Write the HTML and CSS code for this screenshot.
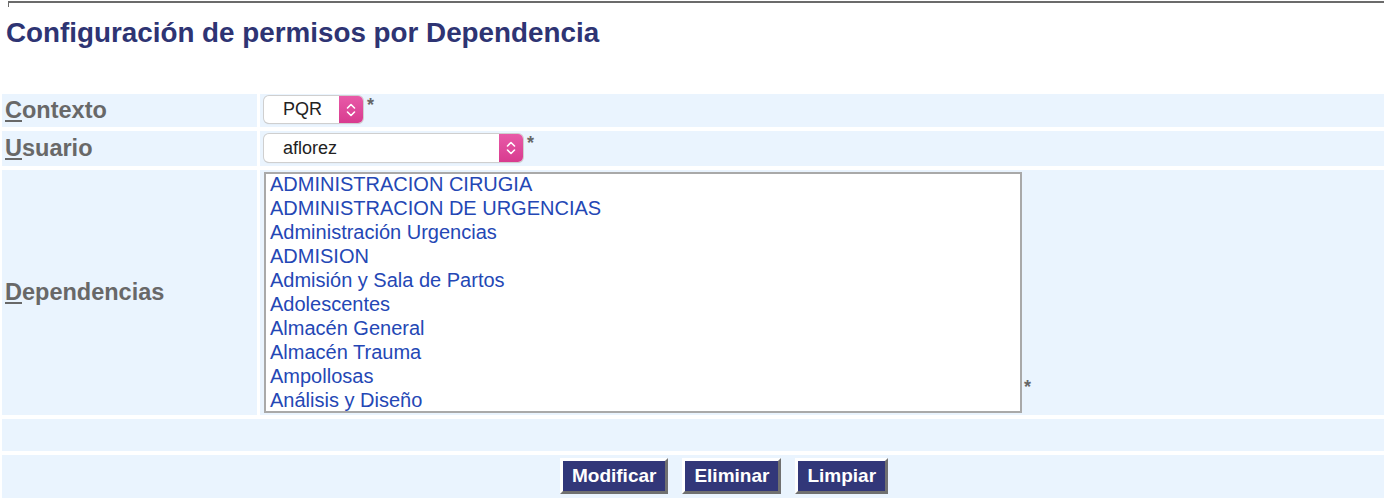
FILE: index.html
```html
<!DOCTYPE html>
<html lang="es">
<head>
<meta charset="utf-8">
<title>Configuración de permisos por Dependencia</title>
<link rel="stylesheet" href="styles.css">
</head>
<body>
<div class="topline"></div>
<h1 class="title">Configuración de permisos por Dependencia</h1>
<div class="form">
  <div class="cell label"><span class="u">C</span>ontexto</div>
  <div class="cell value v1">
    <div class="select small"><span class="sel-text">PQR</span><span class="sel-btn"><svg width="12" height="18" viewBox="0 0 12 18"><path d="M2.5 7 L6 3.5 L9.5 7 M2.5 11 L6 14.5 L9.5 11" fill="none" stroke="#fff" stroke-width="1.6" stroke-linecap="round" stroke-linejoin="round"/></svg></span></div><span class="ast">*</span>
  </div>
  <div class="cell label"><span class="u">U</span>suario</div>
  <div class="cell value v2">
    <div class="select wide"><span class="sel-text">aflorez</span><span class="sel-btn"><svg width="12" height="18" viewBox="0 0 12 18"><path d="M2.5 7 L6 3.5 L9.5 7 M2.5 11 L6 14.5 L9.5 11" fill="none" stroke="#fff" stroke-width="1.6" stroke-linecap="round" stroke-linejoin="round"/></svg></span></div><span class="ast">*</span>
  </div>
  <div class="cell label"><span><span class="u">D</span>ependencias</span></div>
  <div class="cell value bottom">
    <div class="listbox">
      <div class="opt">ADMINISTRACION CIRUGIA</div>
      <div class="opt">ADMINISTRACION DE URGENCIAS</div>
      <div class="opt">Administración Urgencias</div>
      <div class="opt">ADMISION</div>
      <div class="opt">Admisión y Sala de Partos</div>
      <div class="opt">Adolescentes</div>
      <div class="opt">Almacén General</div>
      <div class="opt">Almacén Trauma</div>
      <div class="opt">Ampollosas</div>
      <div class="opt">Análisis y Diseño</div>
    </div><span class="ast ast-low">*</span>
  </div>
  <div class="cell span"></div>
  <div class="cell span buttons">
    <button class="btn">Modificar</button>
    <button class="btn">Eliminar</button>
    <button class="btn">Limpiar</button>
  </div>
</div>
</body>
</html>
```
FILE: styles.css
```css
html, body {
  margin: 0;
  padding: 0;
  background: #ffffff;
  font-family: "Liberation Sans", Arial, Helvetica, sans-serif;
}
.topline {
  margin-left: 8px;
  height: 4px;
  border-top: 2px solid #6b6b6b;
  border-left: 1px solid #6b6b6b;
  margin-top: 1px;
}
.title {
  margin: 9px 0 0 6px;
  font-size: 27.8px;
  line-height: 34px;
  font-weight: bold;
  color: #2e3473;
}
.form {
  margin-top: 44px;
  padding-left: 2px;
  display: grid;
  grid-template-columns: 255px 1fr;
  grid-template-rows: 33px 35px 245px 32px 43px;
  column-gap: 3px;
  row-gap: 4px;
}
.cell {
  background: #eaf4fe;
}
.label {
  font-size: 23.5px;
  font-weight: bold;
  color: #686868;
  padding-left: 3px;
  display: flex;
  align-items: center;
}
.u { text-decoration: underline; }
.value {
  display: flex;
  align-items: flex-start;
  padding-left: 4px;
}
.v1 { padding-top: 2px; }
.v2 { padding-top: 3px; }
.value.bottom { align-items: flex-end; padding-top: 2px; padding-bottom: 2px; }
.span { grid-column: 1 / span 2; }
.buttons {
  display: flex;
  justify-content: center;
  align-items: flex-start;
  gap: 14px;
  padding: 3px 0 0 62px;
}
.select {
  border-radius: 5px;
  background: #fff;
  box-shadow: 0 0 0 1px #cfcfcf, 0 1px 1px rgba(0,0,0,0.2);
  display: flex;
  align-items: center;
  justify-content: space-between;
  overflow: hidden;
}
.small { width: 99px; height: 27px; }
.wide { width: 259px; height: 28px; }
.sel-text {
  font-size: 18px;
  color: #222;
  padding-left: 19px;
}
.sel-btn {
  width: 24px;
  height: 100%;
  background: linear-gradient(#e85aa8, #d83b8f);
  display: flex;
  align-items: center;
  justify-content: center;
}
.ast {
  font-size: 18px;
  font-weight: bold;
  color: #666;
  margin-left: 4px;
  line-height: 18px;
}
.ast-low { margin-left: 2px; line-height: 52px; }
.listbox {
  width: 754px;
  height: 237px;
  border: 2px solid #a9a9a9;
  background: #fff;
  overflow: hidden;
}
.opt {
  font-size: 20px;
  line-height: 20px;
  padding-bottom: 4px;
  color: #2447b5;
  padding-left: 4px;
  white-space: nowrap;
}
.btn {
  font-family: "Liberation Sans", Arial, Helvetica, sans-serif;
  font-size: 19px;
  font-weight: bold;
  color: #fff;
  background: #323779;
  border: 3px solid;
  border-color: #ffffff #707070 #707070 #ffffff;
  padding: 3px 9px 4px 9px;
  height: 36px;
}
```
